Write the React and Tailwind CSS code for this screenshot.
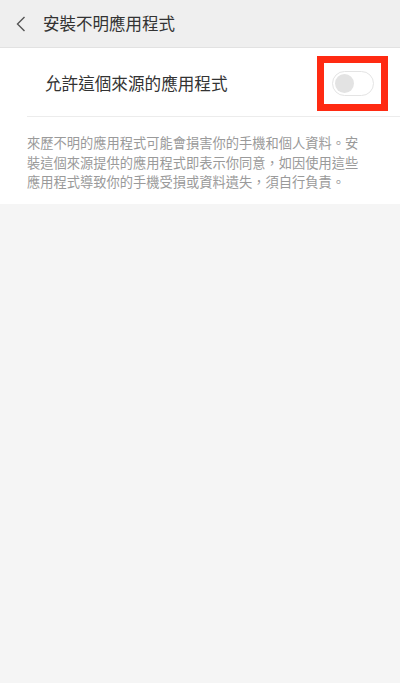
import React from 'react';

const font = { fontFamily: '"Noto Sans CJK TC", "Noto Sans", sans-serif' };

const notice = [
    '來歷不明的應用程式可能會損害你的手機和個人資料。安',
    '裝這個來源提供的應用程式即表示你同意，如因使用這些',
    '應用程式導致你的手機受損或資料遺失，須自行負責。',
];

const App = () => {
    return (
        <div className="w-[400px] min-h-[683px] bg-[#f5f5f5]" style={font}>
            {/* Header */}
            <div className="h-[48px] flex items-center bg-[#efefef] border-b border-[#e2e2e2]">
                <svg width="10" height="16" viewBox="0 0 10 16" className="ml-[16px]">
                    <path d="M8.5 1 L1.5 8 L8.5 15" fill="none" stroke="#555" strokeWidth="1.4" />
                </svg>
                <span className="ml-[17px] text-[16.5px] text-[#333] leading-none">安裝不明應用程式</span>
            </div>

            {/* Setting card */}
            <div className="bg-white">
                <div className="flex items-center h-[70px] pl-[45px] pr-[12px]">
                    <span className="flex-1 text-[16.6px] text-[#333] leading-none">允許這個來源的應用程式</span>
                    <div className="w-[71px] h-[55px] border-[7px] border-[#ff2a12] flex items-center justify-center">
                        <div className="w-[42px] h-[25px] rounded-full border border-[#e4e4e4] bg-white flex items-center px-[2px]">
                            <div className="w-[19px] h-[19px] rounded-full bg-[#e3e3e3]"></div>
                        </div>
                    </div>
                </div>
                <div className="ml-[27px] h-px bg-[#ececec] mt-[-2px]"></div>
                <div className="pl-[27px] pt-[16px] pb-[12px] text-[13.25px] leading-[19.5px] text-[#9a9a9a]">
                    {notice.map((line) => (
                        <div key={line} className="whitespace-nowrap">{line}</div>
                    ))}
                </div>
            </div>
        </div>
    );
};

export default App;
